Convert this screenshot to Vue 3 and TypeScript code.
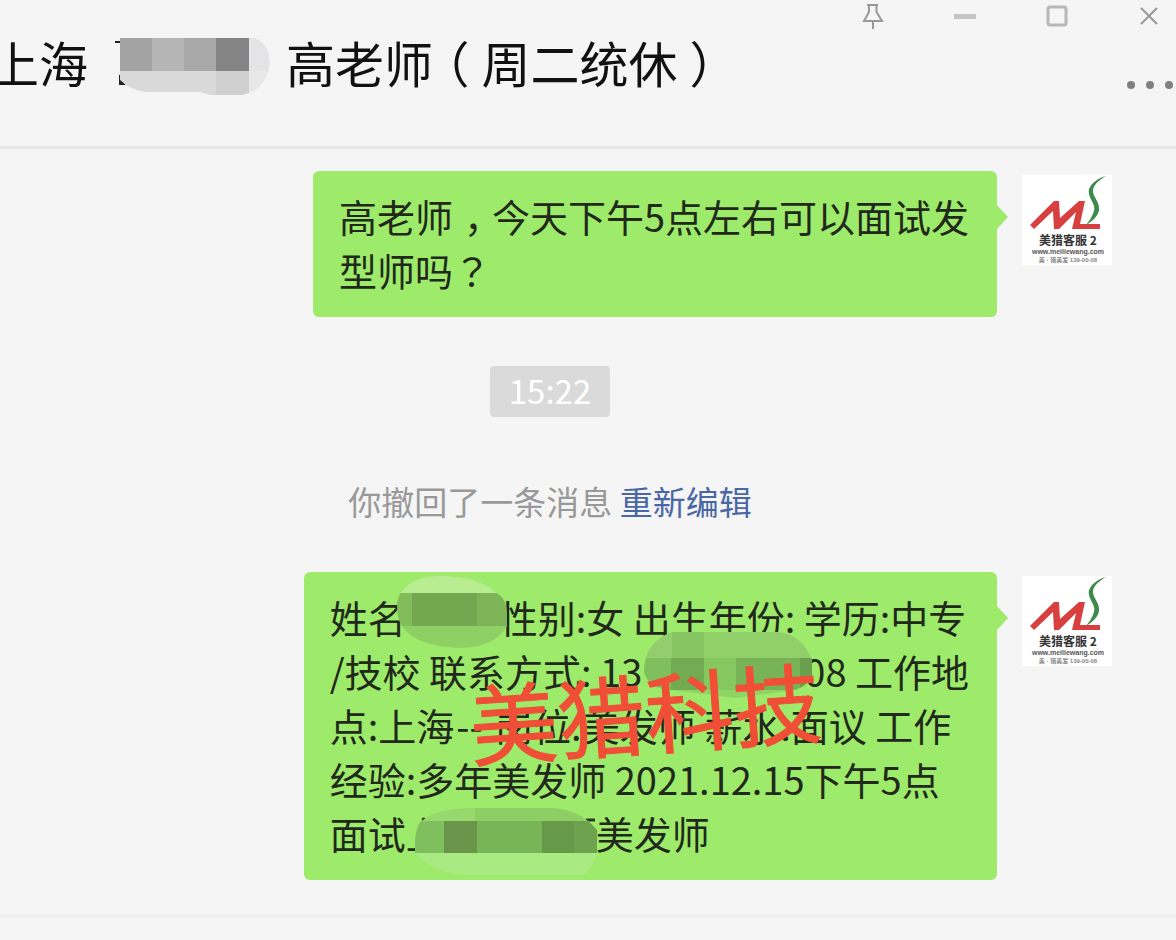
<script setup lang="ts">
interface Cell {
  x: number
  y: number
  w: number
  h: number
  fill: string
}
interface Mosaic {
  id: string
  width: number
  height: number
  outline: string
  cells: Cell[]
}

const cell = (x: number, y: number, w: number, h: number, fill: string): Cell => ({ x, y, w, h, fill })

const titleMask: Mosaic = {
  id: 'mask-title',
  width: 160,
  height: 64,
  outline: 'M8 4H142C162 8 164 46 140 58L130 61H98L88 58H34Q18 56 8 46Z',
  cells: [
    cell(8, 4, 32, 33, '#a3a3a3'),
    cell(40, 4, 32, 33, '#b5b5b5'),
    cell(72, 4, 32, 33, '#a8a8a8'),
    cell(104, 4, 33, 33, '#858585'),
    cell(137, 4, 24, 33, '#e4e4e6'),
    cell(8, 37, 96, 26, '#d9d9d9'),
    cell(104, 37, 33, 26, '#cfcfcf'),
    cell(137, 37, 24, 26, '#e8e8e8'),
  ],
}

const nameMask: Mosaic = {
  id: 'mask-name',
  width: 110,
  height: 72,
  outline: 'M0 30Q0 20 6 14Q16 1 40 0Q82 0 98 16Q110 22 110 38V50Q98 71 64 72Q22 70 8 54Q0 46 0 30Z',
  cells: [
    cell(0, 0, 110, 17, '#b8ed92'),
    cell(0, 17, 15, 33, '#82bd5c'),
    cell(15, 17, 65, 33, '#74a850'),
    cell(80, 17, 30, 33, '#7eb458'),
    cell(0, 50, 110, 22, '#8fd065'),
  ],
}

const phoneMask: Mosaic = {
  id: 'mask-phone',
  width: 168,
  height: 66,
  outline: 'M0 40Q0 10 28 0H134Q158 2 168 28V44Q160 60 136 60L92 66L26 58Q4 56 0 40Z',
  cells: [
    cell(0, 0, 28, 26, '#93cd6e'),
    cell(28, 0, 32, 26, '#87c462'),
    cell(60, 0, 108, 26, '#90cf69'),
    cell(0, 26, 27, 32, '#80bf5d'),
    cell(27, 26, 33, 32, '#72ab51'),
    cell(60, 26, 32, 32, '#85c862'),
    cell(92, 26, 64, 32, '#78b457'),
    cell(156, 26, 12, 32, '#6aa04d'),
    cell(0, 58, 168, 8, '#8fd566'),
  ],
}

const shopMask: Mosaic = {
  id: 'mask-shop',
  width: 184,
  height: 67,
  outline: 'M0 32Q2 14 8 12Q22 0 60 0H138Q166 2 182 22V46Q178 58 170 67H50Q20 66 0 45Z',
  cells: [
    cell(0, 0, 60, 13, '#97d96d'),
    cell(60, 0, 124, 13, '#8dce65'),
    cell(0, 13, 29, 32, '#80bf5e'),
    cell(29, 13, 33, 32, '#6a954b'),
    cell(62, 13, 65, 32, '#78b557'),
    cell(127, 13, 32, 32, '#669949'),
    cell(159, 13, 25, 32, '#6ea24f'),
    cell(0, 45, 184, 22, '#a9ea83'),
  ],
}
</script>

<template>
  <main class="window">
    <header class="header">
      <h1 class="title">
        <span>上海</span>
        <svg class="title-mask" viewBox="0 0 160 64" aria-hidden="true">
          <clipPath :id="titleMask.id"><path :d="titleMask.outline" /></clipPath>
          <path d="M3 8H10M8 41L12 50H8Z" stroke="#222" stroke-width="2" fill="#222" />
          <g :clip-path="`url(#${titleMask.id})`">
            <rect v-for="(c, i) in titleMask.cells" :key="i" :x="c.x" :y="c.y" :width="c.w" :height="c.h" :fill="c.fill" />
          </g>
        </svg>
        <span>高老师<span class="paren">（</span>周二统休<span class="paren">）</span></span>
      </h1>
      <div class="actions">
        <div class="controls">
          <button type="button" aria-label="置顶">
            <svg viewBox="0 0 24 24" fill="none" stroke="#989898" stroke-width="2">
              <path d="M6 1H17M8 1V8L3 17H21L15.500 8V1M12 17V25" />
            </svg>
          </button>
          <button type="button" aria-label="最小化">
            <svg viewBox="0 0 24 24"><rect x="1" y="10" width="22" height="5" fill="#c4c4c4" /></svg>
          </button>
          <button type="button" aria-label="最大化">
            <svg viewBox="0 0 24 24"><rect x="3" y="3" width="18" height="18" rx="2" fill="none" stroke="#b8b8b8" stroke-width="3" /></svg>
          </button>
          <button type="button" aria-label="关闭">
            <svg viewBox="0 0 24 24"><path d="M4 4L20 20M20 4L4 20" fill="none" stroke="#999" stroke-width="2" /></svg>
          </button>
        </div>
        <button type="button" class="more" aria-label="更多">
          <svg viewBox="0 0 48 24" fill="#808080">
            <circle cx="3" cy="12" r="4" /><circle cx="22" cy="12" r="4" /><circle cx="41" cy="12" r="4" />
          </svg>
        </button>
      </div>
    </header>

    <svg class="defs" aria-hidden="true">
      <symbol id="avatar-logo" viewBox="0 0 90 90">
        <rect width="90" height="90" fill="#fff" />
        <path d="M8 50L32 26H37L38 43L57 26H63L58 49H78V54H50L54 37L37 54H32L31 36L12 54Z" fill="#d84040" />
        <path d="M84 1C73 4 65 12 67 19C68 25 74 30 72 36C70 42 68 45 64 50C71 46 76 41 77 35C78 27 71 22 71 16C71 10 77 5 84 1Z" fill="#3d8a4b" />
        <g text-anchor="middle" font-weight="700">
          <text x="46" y="70" font-size="12" fill="#333" xml:space="preserve">美猎客服 2</text>
          <text x="46" y="79" font-size="7" fill="#555" class="tiny">www.meiliewang.com</text>
          <text x="46" y="87" font-size="6" fill="#888" class="tiny">美 · 猎美发 139-00-08</text>
        </g>
      </symbol>
    </svg>

    <section class="chat">
      <article class="message">
        <div class="bubble">
          <p>高老师<span class="comma">，</span>今天下午5点左右可以面试发</p>
          <p>型师吗<span class="question">？</span></p>
        </div>
        <svg class="avatar" role="img" aria-label="美猎客服2"><use href="#avatar-logo" /></svg>
      </article>

      <time class="time">15:22</time>

      <p class="recall">你撤回了一条消息 <a href="#">重新编辑</a></p>

      <article class="message">
        <div class="bubble">
          <p>姓名<span class="gap gap-name"><svg viewBox="0 0 110 72" aria-hidden="true">
            <clipPath :id="nameMask.id"><path :d="nameMask.outline" /></clipPath>
            <g :clip-path="`url(#${nameMask.id})`">
              <rect v-for="(c, i) in nameMask.cells" :key="i" :x="c.x" :y="c.y" :width="c.w" :height="c.h" :fill="c.fill" />
            </g>
          </svg></span>性别:女 出生年份: 学历:中专</p>
          <p>/技校 联系方式: 13<span class="gap gap-phone"><svg viewBox="0 0 168 66" aria-hidden="true">
            <clipPath :id="phoneMask.id"><path :d="phoneMask.outline" /></clipPath>
            <g :clip-path="`url(#${phoneMask.id})`">
              <rect v-for="(c, i) in phoneMask.cells" :key="i" :x="c.x" :y="c.y" :width="c.w" :height="c.h" :fill="c.fill" />
            </g>
          </svg></span>08 工作地</p>
          <p>点:上海<span class="dashes">--</span> 岗位:美发师 薪水:面议 工作</p>
          <p>经验:多年美发师 2021.12.15下午5点</p>
          <p>面试上<span class="gap gap-shop"><svg viewBox="0 0 184 67" aria-hidden="true">
            <path d="M171 12H180" stroke="#2c3a24" stroke-width="3" />
            <clipPath :id="shopMask.id"><path :d="shopMask.outline" /></clipPath>
            <g :clip-path="`url(#${shopMask.id})`">
              <rect v-for="(c, i) in shopMask.cells" :key="i" :x="c.x" :y="c.y" :width="c.w" :height="c.h" :fill="c.fill" />
            </g>
          </svg></span>美发师</p>
          <span class="watermark">美猎科技</span>
        </div>
        <svg class="avatar" role="img" aria-label="美猎客服2"><use href="#avatar-logo" /></svg>
      </article>
    </section>
    <footer class="composer"></footer>
  </main>
</template>

<style>
body {
  margin: 0;
  background: #f5f5f5;
}
</style>

<style scoped>
.window {
  min-height: 100vh;
  display: flex;
  flex-direction: column;
  overflow: hidden;
  background: #f5f5f5;
  font-family: "Noto Sans CJK SC", sans-serif;
}
p,
h1 {
  margin: 0;
  font-weight: 400;
}
.header {
  display: flex;
  justify-content: space-between;
  height: 146px;
  border-bottom: 3px solid #e7e7e7;
}
.title {
  display: flex;
  align-items: center;
  height: 60px;
  margin: 32px 0 0 -10px;
  color: #111;
  font-size: 49px;
  line-height: 60px;
  white-space: nowrap;
}
.title-mask {
  width: 160px;
  height: 64px;
  margin: 8px 14px 0 24px;
}
.paren {
  padding: 0 12px;
  font-feature-settings: "halt";
}
.actions {
  display: flex;
  flex-direction: column;
  align-items: flex-end;
}
.controls {
  display: flex;
  gap: 68px;
  padding: 4px 15px 0 0;
}
button {
  width: 24px;
  height: 24px;
  padding: 0;
  border: 0;
  background: none;
  cursor: pointer;
}
button svg {
  display: block;
  width: 100%;
  height: 100%;
  overflow: visible;
}
.more {
  width: 48px;
  margin-top: 45px;
}
.defs {
  position: absolute;
  width: 0;
  height: 0;
}
.tiny {
  font-family: "Liberation Sans", "Noto Sans CJK SC", sans-serif;
}
.chat {
  display: flex;
  flex-direction: column;
  padding: 22px 64px 34px 0;
}
.message {
  display: flex;
  justify-content: flex-end;
  gap: 25px;
}
.bubble {
  position: relative;
  padding: 18px 28px 20px 26px;
  border-radius: 6px;
  background: #9eea6a;
  color: #20291b;
  font-size: 38px;
  line-height: 54px;
  white-space: nowrap;
}
.bubble::after {
  content: "";
  position: absolute;
  top: 34px;
  left: 100%;
  border: 12px solid transparent;
  border-left: 11px solid #9eea6a;
  border-right: 0;
}
.comma {
  padding: 0 9px 0 11px;
  font-feature-settings: "halt";
}
.question {
  font-family: "Noto Sans CJK TC", sans-serif;
}
.dashes {
  padding: 0 4px 0 2px;
}
.avatar {
  flex: none;
  width: 90px;
  height: 90px;
  margin-top: 4px;
}
.time {
  align-self: center;
  margin: 49px 0 0 -12px;
  padding: 0 19px 2px;
  border-radius: 4px;
  background: #dadada;
  color: #fff;
  font-size: 33px;
  line-height: 49px;
}
.recall {
  align-self: center;
  margin: 60px 0 47px -12px;
  color: #999;
  font-size: 33px;
  line-height: 48px;
}
.recall a {
  color: #4a67a5;
  text-decoration: none;
}
.gap {
  position: relative;
  display: inline-block;
  height: 54px;
  vertical-align: top;
}
.gap svg {
  position: absolute;
}
.gap-name {
  width: 94px;
}
.gap-name svg {
  top: -14px;
  left: -9px;
  width: 110px;
}
.gap-phone {
  width: 162px;
}
.gap-phone svg {
  top: -12px;
  left: 2px;
  width: 168px;
}
.gap-shop {
  width: 152px;
}
.gap-shop svg {
  top: 2px;
  left: -29px;
  width: 184px;
}
.watermark {
  position: absolute;
  top: 88px;
  left: 165px;
  color: #f04e36;
  font-size: 88px;
  line-height: 100px;
  -webkit-text-stroke: 1px #f04e36;
  transform: rotate(-4deg);
}
.composer {
  flex: 1;
  border-top: 4px solid #efefef;
}
</style>
